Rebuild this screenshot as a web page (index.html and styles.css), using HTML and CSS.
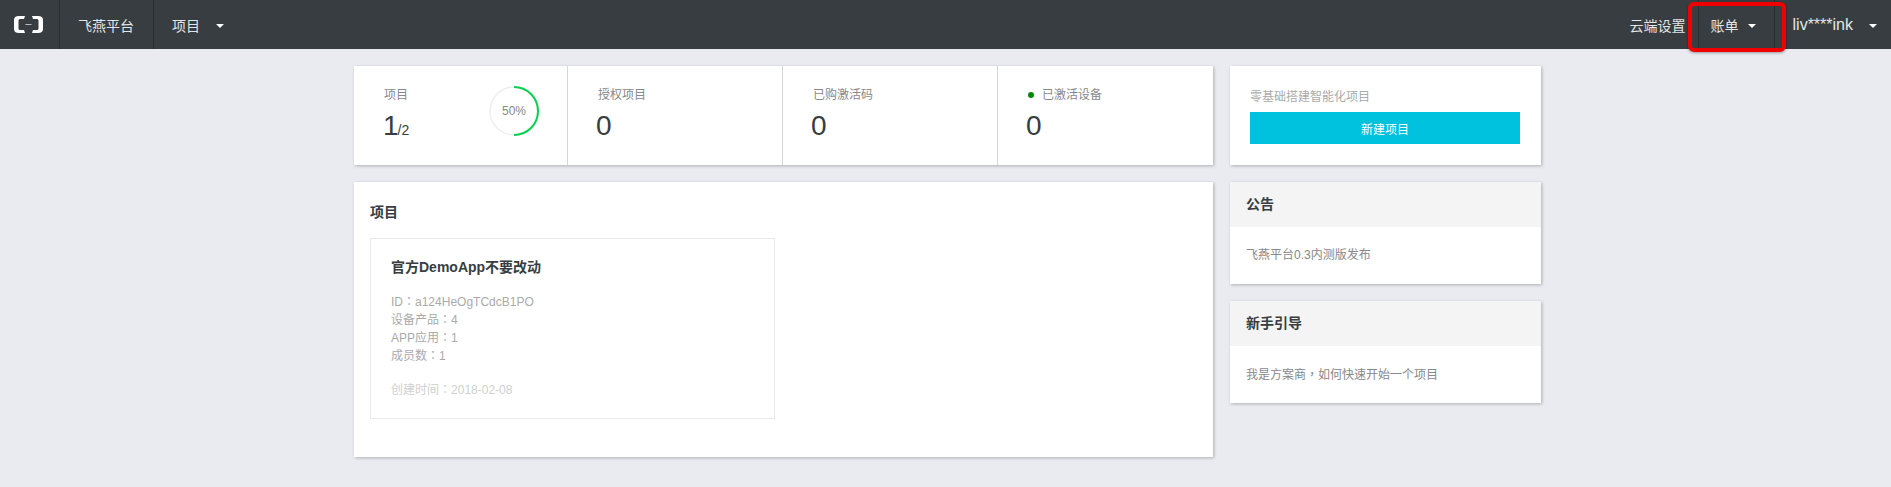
FILE: index.html
```html
<!DOCTYPE html>
<html lang="zh-CN">

<head>
    <meta charset="UTF-8">
    <title>飞燕平台</title>
    <link rel="stylesheet" href="styles.css">
</head>

<body>
    <header class="topbar">
        <div class="topbar-left">
            <a class="logo">
                <svg width="29" height="17" viewBox="0 0 29 17">
                    <path d="M11 0H5Q0 0 0 4V13Q0 17 5 17H11L10 14H6Q4.5 14 4.5 12.5V4.5Q4.5 3 6 3H10Z" fill="#fff" />
                    <path d="M18 0H24Q29 0 29 4V13Q29 17 24 17H18L19 14H23Q24.5 14 24.5 12.5V4.5Q24.5 3 23 3H19Z" fill="#fff" />
                    <rect x="11.5" y="8" width="6" height="1" fill="#b9bbbd" />
                </svg>
            </a>
            <a class="nav-item brand">飞燕平台</a>
            <a class="nav-item">项目<i class="caret"></i></a>
        </div>
        <div class="topbar-right">
            <a class="nav-plain">云端设置</a>
            <a class="nav-item bill">账单<i class="caret"></i></a>
            <a class="nav-plain user">liv****ink<i class="caret caret-user"></i></a>
        </div>
    </header>
    <div class="highlight"></div>

    <main class="page">
        <section class="col-main">
            <div class="card stats">
                <div class="stat stat-project">
                    <div>
                        <div class="stat-label">项目</div>
                        <div class="stat-value">1<small>/2</small></div>
                    </div>
                    <div class="ring">
                        <svg width="50" height="50" viewBox="0 0 50 50">
                            <circle cx="25" cy="25" r="24" fill="none" stroke="#eeeeee" stroke-width="1.6" />
                            <path d="M25 1A24 24 0 0 1 25 49" fill="none" stroke="#06d050" stroke-width="2" />
                        </svg>
                        <span class="ring-text">50%</span>
                    </div>
                </div>
                <div class="stat">
                    <div class="stat-label">授权项目</div>
                    <div class="stat-value">0</div>
                </div>
                <div class="stat">
                    <div class="stat-label">已购激活码</div>
                    <div class="stat-value">0</div>
                </div>
                <div class="stat">
                    <div class="stat-label"><i class="dot"></i>已激活设备</div>
                    <div class="stat-value">0</div>
                </div>
            </div>

            <div class="card projects">
                <h2 class="projects-title">项目</h2>
                <div class="project-card">
                    <h3 class="project-name">官方DemoApp不要改动</h3>
                    <ul class="project-meta">
                        <li>ID<span class="punct" lang="zh-Hant">：</span>a124HeOgTCdcB1PO</li>
                        <li>设备产品<span class="punct" lang="zh-Hant">：</span>4</li>
                        <li>APP应用<span class="punct" lang="zh-Hant">：</span>1</li>
                        <li>成员数<span class="punct" lang="zh-Hant">：</span>1</li>
                    </ul>
                    <div class="project-date">创建时间<span class="punct" lang="zh-Hant">：</span>2018-02-08</div>
                </div>
            </div>
        </section>

        <aside class="col-side">
            <div class="card create">
                <div class="create-text">零基础搭建智能化项目</div>
                <button class="create-btn">新建项目</button>
            </div>
            <div class="card panel">
                <div class="panel-head">公告</div>
                <div class="panel-body">飞燕平台0.3内测版发布</div>
            </div>
            <div class="card panel">
                <div class="panel-head">新手引导</div>
                <div class="panel-body">我是方案商<span class="punct" lang="zh-Hant">，</span>如何快速开始一个项目</div>
            </div>
        </aside>
    </main>
</body>

</html>
```

FILE: styles.css
```css
* {
    box-sizing: border-box;
}

body {
    margin: 0;
    height: 487px;
    overflow: hidden;
    background: #e9ebf0;
    color: #373d41;
    font-family: "Liberation Sans", "Noto Sans CJK SC", sans-serif;
    font-size: 12px;
}

.topbar {
    display: flex;
    justify-content: space-between;
    height: 49px;
    background: #373d41;
    color: #e4e5e6;
    font-size: 14px;
}

.topbar-left,
.topbar-right {
    display: flex;
    align-items: stretch;
}

.logo {
    display: flex;
    align-items: center;
    width: 60px;
    padding-left: 14px;
    border-right: 1px solid #2a2f32;
}

.nav-item {
    display: flex;
    align-items: center;
    padding: 0 16px 0 18px;
}

.brand {
    width: 94px;
    border-right: 1px solid #2a2f32;
}

.nav-plain {
    display: flex;
    align-items: center;
}

.bill {
    width: 77px;
    margin-left: 12px;
    padding-left: 12px;
    border-left: 1px solid #2a2f32;
    border-right: 1px solid #2a2f32;
}

.user {
    margin-left: 18px;
    padding-right: 14px;
    font-size: 16px;
}

.caret {
    display: inline-block;
    width: 0;
    height: 0;
    margin-left: 16px;
    margin-top: 2px;
    border-top: 4px solid #fff;
    border-left: 4.5px solid transparent;
    border-right: 4.5px solid transparent;
}

.bill .caret {
    margin-left: 9px;
}

.highlight {
    position: absolute;
    top: 2px;
    left: 1688px;
    width: 98px;
    height: 50px;
    border: 4px solid #f00000;
    border-radius: 6px;
    box-shadow: 0 1px 3px rgba(0, 0, 0, 0.35);
}

.page {
    display: flex;
    justify-content: center;
    gap: 17px;
    padding: 17px 0 0 4px;
}

.col-main {
    display: flex;
    flex-direction: column;
    gap: 17px;
    width: 859px;
}

.col-side {
    display: flex;
    flex-direction: column;
    gap: 17px;
    width: 311px;
}

.card {
    background: #fff;
    box-shadow: 1px 1px 3px rgba(0, 0, 0, 0.25);
}

.stats {
    display: flex;
    height: 99px;
}

.stat {
    width: 215px;
    padding: 21px 0 0 30px;
    border-left: 1px solid #d5d6d8;
}

.stat:first-child {
    width: 213px;
    border-left: none;
}

.stat:last-child {
    width: 216px;
}

.stat-project {
    display: flex;
    justify-content: space-between;
    padding-right: 28px;
}

.stat-label {
    height: 16px;
    line-height: 16px;
    color: #888;
}

.stat-value {
    margin-top: 7px;
    margin-left: -2px;
    line-height: 32px;
    font-size: 28px;
}

.stat-project .stat-value {
    margin-left: -1px;
}

.stat-value small {
    margin-left: -1px;
    font-size: 14px;
}

.dot {
    display: inline-block;
    width: 6px;
    height: 6px;
    margin: 0 8px 1px 0;
    border-radius: 50%;
    background: #008a00;
}

.ring {
    position: relative;
    width: 50px;
    height: 50px;
    margin-top: -1px;
}

.ring-text {
    position: absolute;
    top: 0;
    left: 0;
    width: 50px;
    line-height: 50px;
    text-align: center;
    color: #888;
}

.projects {
    height: 275px;
    padding: 0 16px;
}

.projects-title {
    margin: 0;
    padding-top: 21px;
    height: 56px;
    line-height: 18px;
    font-size: 14px;
    font-weight: bold;
}

.project-card {
    width: 405px;
    height: 181px;
    padding: 19px 20px 0;
    border: 1px solid #e8e9ea;
}

.project-name {
    margin: 0;
    line-height: 18px;
    font-size: 14px;
    font-weight: bold;
}

.project-meta {
    margin: 16px 0 0;
    padding: 0;
    list-style: none;
    line-height: 18px;
    color: #aaa;
}

.project-meta li {
    height: 18px;
}

.project-date {
    height: 18px;
    margin-top: 16px;
    line-height: 18px;
    color: #d0d0d0;
}

/* simplified glyphs sit these marks in the corner, the reference centres them */
.punct {
    font-family: "Noto Sans CJK TC", sans-serif;
}

.create {
    height: 99px;
    padding: 22px 20px 0;
}

.create-text {
    line-height: 18px;
    color: #aaa;
}

.create-btn {
    display: block;
    width: 270px;
    height: 32px;
    margin-top: 6px;
    padding: 0;
    border: none;
    background: #00c1de;
    color: #fff;
    font-family: inherit;
    font-size: 12px;
}

.panel {
    height: 102px;
}

.panel-head {
    height: 45px;
    padding-left: 16px;
    line-height: 45px;
    background: #f4f4f4;
    font-size: 14px;
    font-weight: bold;
}

.panel-body {
    height: 57px;
    padding: 19px 16px 0;
    line-height: 18px;
    color: #888;
}
```
